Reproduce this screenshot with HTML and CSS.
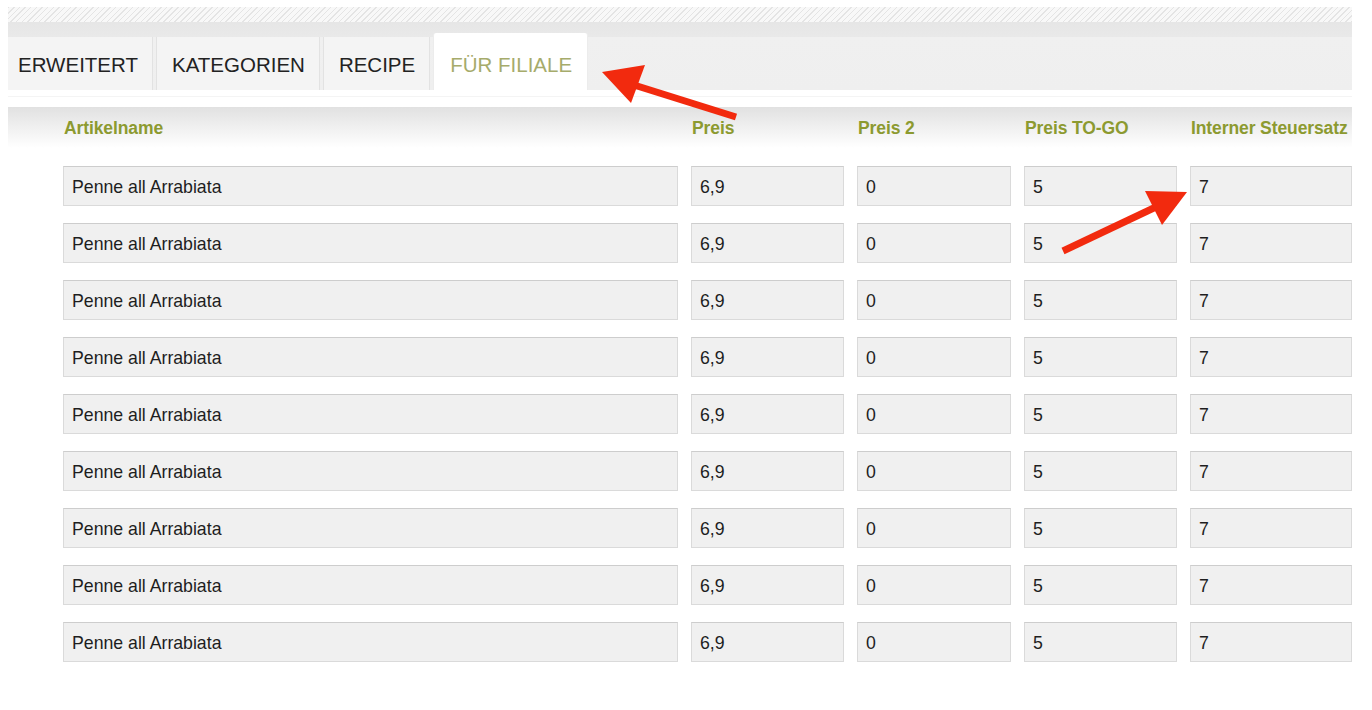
FILE: index.html
```html
<!DOCTYPE html>
<html lang="de">
<head>
    <meta charset="UTF-8">
    <meta name="viewport" content="width=device-width, initial-scale=1.0">
    <title>Für Filiale</title>
    <link rel="stylesheet" href="styles.css">
</head>
<body>

    <div class="page">
        <div class="hatch"></div>

        <div class="tabbar">
            <div class="tabs">
                <div class="tab">ERWEITERT</div>
                <div class="tab">KATEGORIEN</div>
                <div class="tab">RECIPE</div>
                <div class="tab active">FÜR FILIALE</div>
            </div>
        </div>

        <div class="spacer"></div>

        <div class="grid table-head">
            <div class="head-cell">Artikelname</div>
            <div class="head-cell">Preis</div>
            <div class="head-cell">Preis 2</div>
            <div class="head-cell">Preis TO-GO</div>
            <div class="head-cell">Interner Steuersatz</div>
        </div>

        <div class="rows" id="rows"></div>
    </div>

    <!-- annotation arrows -->
    <svg class="arrows" width="1372" height="710" viewBox="0 0 1372 710">
        <line x1="736" y1="117" x2="634" y2="85" stroke="#f22a0e" stroke-width="7" />
        <polygon points="602,72 645,65 631,103" fill="#f22a0e" />
        <line x1="1063" y1="251" x2="1158" y2="206" stroke="#f22a0e" stroke-width="7" />
        <polygon points="1187,192 1145,191 1162,225" fill="#f22a0e" />
    </svg>

    <script>
        const rows = document.getElementById("rows");
        for (let i = 0; i < 9; i++) {
            const row = document.createElement("div");
            row.classList.add("grid", "row");
            row.innerHTML = `
                <input class="field" type="text" value="Penne all Arrabiata" readonly>
                <input class="field" type="text" value="6,9" readonly>
                <input class="field" type="text" value="0" readonly>
                <input class="field" type="text" value="5" readonly>
                <input class="field" type="text" value="7" readonly>
            `;
            rows.appendChild(row);
        }
    </script>

</body>
</html>
```

FILE: styles.css
```css
body {
    margin: 0;
    font-family: "Liberation Sans", Arial, sans-serif;
    background-color: #fff;
    overflow: hidden;
}

.page {
    width: 1344px;
    margin-left: 8px;
    padding-top: 7px;
    overflow: hidden;
}

.hatch {
    height: 15px;
    background: repeating-linear-gradient(-45deg, #e4e4e4 0 1px, #f8f8f8 1px 4px);
}

.tabbar {
    height: 68px;
    display: flex;
    align-items: flex-end;
    background: linear-gradient(#e6e6e6 0, #e9e9e9 15px, #f0f0f0 15px, #efefef 100%);
}

.tabs {
    display: flex;
    align-items: flex-end;
    gap: 3px;
    margin-left: -6px;
}

.tab {
    height: 53px;
    line-height: 56px;
    padding: 0 14px 0 15px;
    font-size: 20.5px;
    color: #222;
    background-color: #f4f4f4;
    border-left: 1px solid #e2e2e2;
    border-right: 1px solid #e2e2e2;
}

.tab.active {
    height: 57px;
    line-height: 64px;
    padding: 0 15px 0 16px;
    color: #a6ab6b;
    background-color: #fff;
    border-color: #ececec;
    border-radius: 3px 3px 0 0;
}

.spacer {
    height: 17px;
    background: linear-gradient(#fff 0 6px, #f4f4f4 6px 7px, #fff 7px);
}

.grid {
    display: grid;
    grid-template-columns: 615px 153px 154px 153px 1fr;
    column-gap: 13px;
    padding-left: 55px;
}

.table-head {
    height: 41px;
    align-items: center;
    background: linear-gradient(#e1e1e1, #f3f3f3 60%, #fff);
}

.head-cell {
    padding-left: 1px;
    padding-top: 2px;
    font-size: 17.5px;
    font-weight: bold;
    letter-spacing: -0.1px;
    color: #8c9a30;
    white-space: nowrap;
    overflow: hidden;
}

.rows {
    display: flex;
    flex-direction: column;
    gap: 17px;
    padding-top: 18px;
}

.field {
    box-sizing: border-box;
    width: 100%;
    height: 40px;
    margin: 0;
    padding: 2px 8px 0;
    font-family: "Liberation Sans", Arial, sans-serif;
    font-size: 17.7px;
    color: #1e1e1e;
    background-color: #f0f0f0;
    border: 1px solid #dadada;
    border-top-color: #cdcdcd;
    border-radius: 0;
    outline: none;
}

.arrows {
    position: absolute;
    top: 0;
    left: 0;
    pointer-events: none;
}
```
